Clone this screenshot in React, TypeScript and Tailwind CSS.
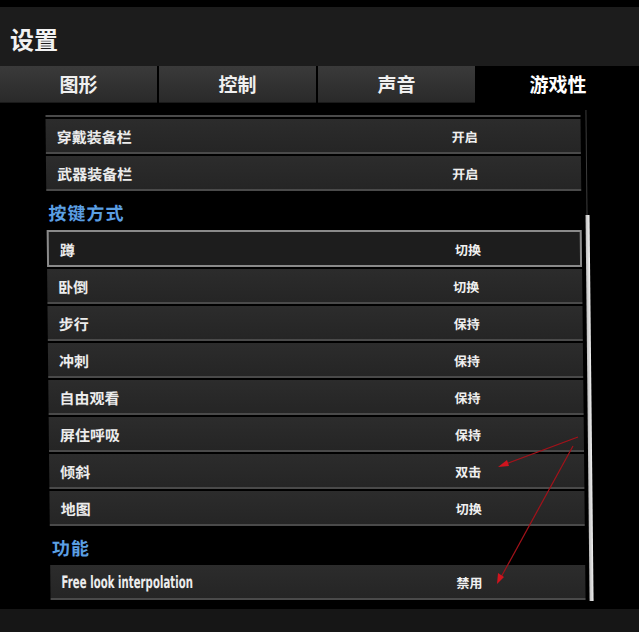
import React from "react";

type Row = { label: string; value: string; selected?: boolean; latin?: boolean };

const equipRows: Row[] = [
  { label: "穿戴装备栏", value: "开启" },
  { label: "武器装备栏", value: "开启" },
];

const keyRows: Row[] = [
  { label: "蹲", value: "切换", selected: true },
  { label: "卧倒", value: "切换" },
  { label: "步行", value: "保持" },
  { label: "冲刺", value: "保持" },
  { label: "自由观看", value: "保持" },
  { label: "屏住呼吸", value: "保持" },
  { label: "倾斜", value: "双击" },
  { label: "地图", value: "切换" },
];

const featureRows: Row[] = [{ label: "Free look interpolation", value: "禁用", latin: true }];

const tabs = ["图形", "控制", "声音"];

function SettingRow({ row }: { row: Row }) {
  const base = row.selected
    ? "border-2 border-[#8a8a8a] bg-[#1d1d1d] h-[37px]"
    : "border-b-2 border-[#4a4a4a] bg-gradient-to-b from-[#2c2c2c] to-[#252525] h-[35px]";
  return (
    <div className={`flex items-center ${base}`}>
      <div className="w-[406px] pl-[11px] pt-[3px] text-[15px] font-bold text-[#ececec]">
        {row.latin ? (
          <span className="inline-block origin-left scale-x-[0.6] whitespace-nowrap text-[17px] [font-family:'DejaVu_Sans','Liberation_Sans',sans-serif]">
            {row.label}
          </span>
        ) : (
          row.label
        )}
      </div>
      <div className="pt-[2px] text-[13px] font-bold text-[#f0f0f0]">{row.value}</div>
    </div>
  );
}

function SectionTitle({ text }: { text: string }) {
  return (
    <div className="h-[39px] flex items-end pb-[4px] pl-[2px] text-[18px] font-bold text-[#5b9fe3] tracking-[1px]">
      {text}
    </div>
  );
}

export default function App() {
  return (
    <div className="relative w-[639px] h-[632px] bg-black overflow-hidden flex flex-col [font-family:'Noto_Sans_CJK_SC','Noto_Sans',sans-serif]">
      {/* window header */}
      <div className="mt-[7px] h-[59px] bg-[#1c1c1c] flex items-center pl-[10px] pt-[5px]">
        <span className="text-[24px] font-bold text-[#f2f2f2]">设置</span>
      </div>

      {/* tab strip */}
      <div className="h-[37px] flex gap-[2px] bg-black">
        {tabs.map((t) => (
          <div
            key={t}
            className="w-[157px] flex items-center justify-center bg-gradient-to-b from-[#3a3a3a] to-[#2a2a2a] border-b border-[#1a1a1a] text-[19px] font-bold text-[#f0f0f0]"
          >
            {t}
          </div>
        ))}
        <div className="flex-1 flex items-center justify-center bg-black text-[19px] font-bold text-white">
          游戏性
        </div>
      </div>

      {/* scrolling list */}
      <div className="flex-1 flex skew-x-[0.6deg]">
        <div className="ml-[48px] w-[535px] flex flex-col pt-[12px]">
          <div className="h-[2px] bg-[#4a4a4a] mb-[2px]" />
          <div className="flex flex-col gap-[2px]">
            {equipRows.map((r) => (
              <SettingRow key={r.label} row={r} />
            ))}
          </div>
          <SectionTitle text="按键方式" />
          <div className="flex flex-col gap-[2px]">
            {keyRows.map((r) => (
              <SettingRow key={r.label} row={r} />
            ))}
          </div>
          <SectionTitle text="功能" />
          <div className="flex flex-col gap-[2px]">
            {featureRows.map((r) => (
              <SettingRow key={r.label} row={r} />
            ))}
          </div>
        </div>

        {/* scrollbar */}
        <div className="ml-[4px] w-[5px] flex flex-col pt-[7px]">
          <div className="ml-[1px] w-[1px] h-[105px] bg-[#3c3c3c]" />
          <div className="w-[4px] h-[386px] bg-gradient-to-r from-[#bdbdbd] to-[#f2f2f2]" />
        </div>
      </div>

      {/* footer bar */}
      <div className="h-[23px] bg-[#161616]" />

      {/* red annotation arrows */}
      <svg className="absolute left-0 top-0 pointer-events-none" width="639" height="632" viewBox="0 0 639 632">
        <g stroke="#a3121a" strokeWidth="1.2" fill="none">
          <line x1="578" y1="437" x2="503" y2="465" />
          <line x1="573" y1="446" x2="500" y2="579" />
        </g>
        <g fill="#d0141e">
          <polygon points="498,467 507,460 509,466" />
          <polygon points="497,584 498,573 504,577" />
        </g>
      </svg>
    </div>
  );
}
